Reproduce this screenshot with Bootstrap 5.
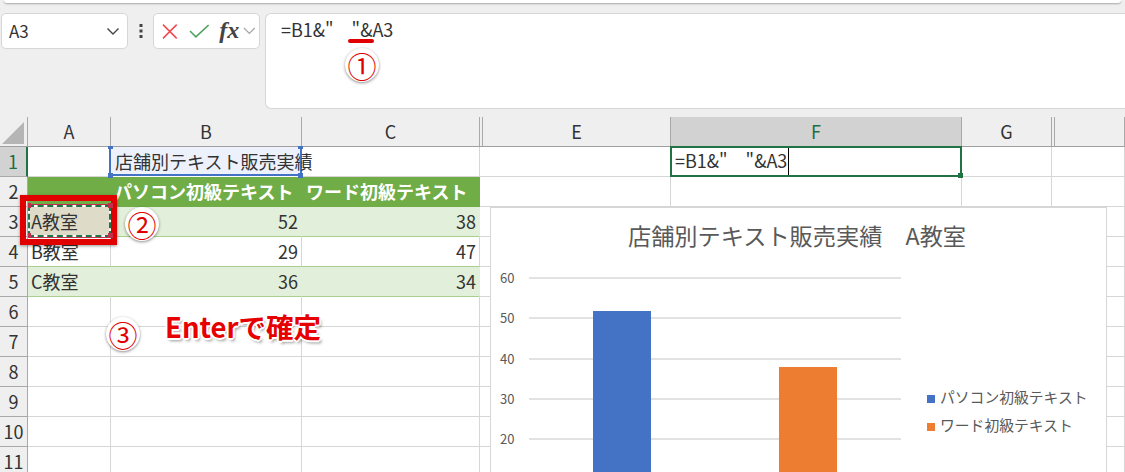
<!DOCTYPE html>
<html lang="ja">
<head>
<meta charset="utf-8">
<title>Excel</title>
<link href="https://cdn.jsdelivr.net/npm/bootstrap@5.3.0/dist/css/bootstrap.min.css" rel="stylesheet">
<style>
html,body{height:472px;overflow:hidden;margin:0}
body{background:#efefef;font-family:"Noto Sans CJK JP","Noto Sans",sans-serif;color:#333}
.ribbon-edge{height:3px;background:#fff;margin:0 4px;border-radius:0 0 6px 6px;box-shadow:0 1px 2px rgba(0,0,0,.3)}
.fbar{height:114px;padding:10px 0 0 1px}
.fbox{background:#fff;border:1px solid #d6d6d6;border-radius:5px}
.namebox{width:127px;height:36px;padding:0 7px;font-size:17px}
.grip{width:25px;height:36px}
.fxbox{width:107px;height:36px;padding:0 3px 0 8px}
.fx{font-family:"Liberation Serif",serif;font-style:italic;font-weight:700;font-size:24px;color:#444;line-height:1;margin-left:10px;margin-top:-3px}
.formula{position:relative;height:96px;flex:1;margin-left:5px;border-right:0;border-radius:6px 0 0 6px;padding:3px 15px;font-size:18px;line-height:25px;white-space:pre}
.underline-red{position:absolute;left:82px;top:25px;width:26px;height:4px;background:#e00000;border-radius:2px}
.num-badge{position:absolute;border-radius:50%;background:#fff;box-shadow:0 1px 3px rgba(0,0,0,.45);color:#e00000;width:34px;height:34px;font-size:29px;line-height:1}
.sheet{position:relative;height:355px;overflow:hidden;background:#fff;display:grid;grid-template-columns:28px 83px 191px 178px 3px 188px 291px 90px 3px 1fr;grid-auto-rows:30px;font-size:18px}
.cell{border-right:1px solid #d6d6d6;border-bottom:1px solid #d6d6d6;padding:0 3px;line-height:28px;white-space:pre;background:#fff}
.thin{border-right:0;padding:0}
.num{text-align:right;padding-right:3px}
.colh{background:#efefef;border-right:1px solid #a9a9a9;border-bottom:1px solid #9f9f9f;text-align:center;padding:0;line-height:29px}
.colh-on{background:#d2d2d2;color:#1f6e43}
.rowh{background:#efefef;border-right:1px solid #a9a9a9;border-bottom:1px solid #a9a9a9;text-align:center;padding:0;line-height:29px}
.rowh-on{background:#d2d2d2;color:#1f6e43;border-right:2px solid #217346}
.corner{position:relative}
.corner svg{position:absolute;left:2px;top:5px}
.hdr{background:#70ad47;color:#fff;font-weight:700;border-right-color:#70ad47;border-bottom-color:#70ad47}
.hdr-c{padding-left:4px}
.band{background:#e2efda;border-right-color:#e2efda;border-bottom-color:#a9d08e}
.plain{border-bottom-color:#a9d08e}
.ants{background:#dedbc9}
.sel-b{position:relative;padding-left:4px;background:#ecf1fb;box-shadow:-2px 0 0 #4472c4,inset 0 -2px 0 #4472c4;border-right-color:#4472c4;border-bottom-color:#fff;overflow:visible}
.sel-b::after{content:"";position:absolute;right:0;top:0;bottom:0;width:1px;background:#4472c4}
.hnd{position:absolute;width:5px;height:5px;background:#4472c4}
.active-f{position:absolute;left:670px;top:29px;width:292px;height:31px;border:2px solid #217346;font-size:18px;line-height:25px;padding-left:3px;white-space:pre;background:#fff}
.caret-line{display:inline-block;width:1px;height:27px;background:#000;vertical-align:top;margin-left:1px}
.fill-h{position:absolute;right:-3px;bottom:-3px;width:5px;height:5px;background:#217346;border:0}
.redbox{position:absolute;left:20px;top:78px;width:97px;height:50px;border:6px solid #e00000;box-shadow:0 1px 3px rgba(0,0,0,.4)}
.ants-line{position:absolute;left:2px;top:4px;width:83px;height:32px;border:2px solid #fff;box-shadow:0 -1px 0 #c0304a,0 1px 0 #c0304a}
.ants-line::after{content:"";position:absolute;inset:-2px;border:2px dashed #217346}
.red-h{position:absolute;width:5px;height:5px;background:#c0304a}
.chartbox{position:absolute;left:490px;top:90px;width:617px;height:290px;background:#fff;border:1px solid #d6d6d6;border-bottom:0}
.chartbox svg{display:block}
.chartbox text{font-family:"Noto Sans CJK JP","Noto Sans",sans-serif;fill:#595959}
.enter-t{position:absolute;left:165px;top:190px;font-size:27.500px;font-weight:700;line-height:38px;color:#e60000;white-space:pre;text-shadow:1px 1px 0 #fff,-1px -1px 0 #fff,1px -1px 0 #fff,-1px 1px 0 #fff,2px 0 0 #fff,-2px 0 0 #fff,0 2px 0 #fff,0 -2px 0 #fff,2px 3px 3px rgba(0,0,0,.4)}
</style>
</head>
<body>
<div class="ribbon-edge"></div>
<div class="fbar d-flex align-items-start">
  <div class="fbox namebox d-flex align-items-center justify-content-between">
    <span>A3</span>
    <svg width="14" height="9" viewBox="0 0 14 9"><path d="M1.5 1.5 7 7l5.500-5.500" fill="none" stroke="#444" stroke-width="1.400"/></svg>
  </div>
  <div class="grip d-flex align-items-center justify-content-center">
    <svg width="4" height="14" viewBox="0 0 4 14"><rect x=".5" y="0" width="3" height="3" fill="#444"/><rect x=".5" y="5.500" width="3" height="3" fill="#444"/><rect x=".5" y="11" width="3" height="3" fill="#444"/></svg>
  </div>
  <div class="fbox fxbox d-flex align-items-center">
    <svg width="16" height="15" viewBox="0 0 16 15"><path d="M1 .5l14 14M15 .5l-14 14" fill="none" stroke="#f0484e" stroke-width="1.500"/></svg>
    <svg width="21" height="14" viewBox="0 0 21 14" style="margin-left:11px"><path d="M1 7l6 6L20 1" fill="none" stroke="#4ea25f" stroke-width="1.500"/></svg>
    <span class="fx">fx</span>
    <svg class="ms-1" width="13" height="8" viewBox="0 0 13 8"><path d="M1 1l5.500 5.500L12 1" fill="none" stroke="#a6a6a6" stroke-width="1.300"/></svg>
  </div>
  <div class="fbox formula">=B1&amp;"　"&amp;A3<span class="underline-red"></span><span class="num-badge d-flex align-items-center justify-content-center" style="left:79px;top:34px">①</span></div>
</div>
<div class="sheet">
  <div class="cell colh corner"><svg width="22" height="22" viewBox="0 0 22 22"><path d="M22 0v22H0z" fill="#b5b5b5"/></svg></div><div class="cell colh">A</div><div class="cell colh">B</div><div class="cell colh">C</div><div class="cell colh"></div><div class="cell colh">E</div><div class="cell colh colh-on">F</div><div class="cell colh">G</div><div class="cell colh"></div><div class="cell colh"></div>

  <div class="cell rowh rowh-on">1</div><div class="cell"></div><div class="cell sel-b">店舗別テキスト販売実績<i class="hnd" style="left:-3px;top:-1px;height:3px"></i><i class="hnd" style="left:187px;top:-1px;height:3px"></i><i class="hnd" style="left:-3px;top:26px"></i><i class="hnd" style="left:187px;top:26px"></i></div><div class="cell"></div><div class="cell thin"></div><div class="cell"></div><div class="cell"></div><div class="cell"></div><div class="cell thin"></div><div class="cell"></div>

  <div class="cell rowh">2</div><div class="cell hdr"></div><div class="cell hdr">パソコン初級テキスト</div><div class="cell hdr hdr-c">ワード初級テキスト</div><div class="cell thin"></div><div class="cell"></div><div class="cell"></div><div class="cell"></div><div class="cell thin"></div><div class="cell"></div>

  <div class="cell rowh">3</div><div class="cell band ants">A教室</div><div class="cell band num">52</div><div class="cell band num">38</div><div class="cell thin"></div><div class="cell"></div><div class="cell"></div><div class="cell"></div><div class="cell thin"></div><div class="cell"></div>

  <div class="cell rowh">4</div><div class="cell plain">B教室</div><div class="cell plain num">29</div><div class="cell plain num">47</div><div class="cell thin"></div><div class="cell"></div><div class="cell"></div><div class="cell"></div><div class="cell thin"></div><div class="cell"></div>

  <div class="cell rowh">5</div><div class="cell band">C教室</div><div class="cell band num">36</div><div class="cell band num">34</div><div class="cell thin"></div><div class="cell"></div><div class="cell"></div><div class="cell"></div><div class="cell thin"></div><div class="cell"></div>

  <div class="cell rowh">6</div><div class="cell"></div><div class="cell"></div><div class="cell"></div><div class="cell thin"></div><div class="cell"></div><div class="cell"></div><div class="cell"></div><div class="cell thin"></div><div class="cell"></div>
  <div class="cell rowh">7</div><div class="cell"></div><div class="cell"></div><div class="cell"></div><div class="cell thin"></div><div class="cell"></div><div class="cell"></div><div class="cell"></div><div class="cell thin"></div><div class="cell"></div>
  <div class="cell rowh">8</div><div class="cell"></div><div class="cell"></div><div class="cell"></div><div class="cell thin"></div><div class="cell"></div><div class="cell"></div><div class="cell"></div><div class="cell thin"></div><div class="cell"></div>
  <div class="cell rowh">9</div><div class="cell"></div><div class="cell"></div><div class="cell"></div><div class="cell thin"></div><div class="cell"></div><div class="cell"></div><div class="cell"></div><div class="cell thin"></div><div class="cell"></div>
  <div class="cell rowh">10</div><div class="cell"></div><div class="cell"></div><div class="cell"></div><div class="cell thin"></div><div class="cell"></div><div class="cell"></div><div class="cell"></div><div class="cell thin"></div><div class="cell"></div>
  <div class="cell rowh">11</div><div class="cell"></div><div class="cell"></div><div class="cell"></div><div class="cell thin"></div><div class="cell"></div><div class="cell"></div><div class="cell"></div><div class="cell thin"></div><div class="cell"></div>

  <div class="active-f">=B1&amp;"　"&amp;A3<span class="caret-line"></span><i class="fill-h"></i></div>

  <div class="chartbox">
    <svg width="615" height="290" viewBox="0 0 615 290">
      <text x="137" y="37" font-size="23.200">店舗別テキスト販売実績　A教室</text>
      <g stroke="#d9d9d9" stroke-width="1.300">
        <path d="M38 70H410"/><path d="M38 110H410"/><path d="M38 151H410"/><path d="M38 191H410"/><path d="M38 231H410"/>
      </g>
      <g font-size="13">
        <text x="9" y="75">60</text><text x="9" y="115">50</text><text x="9" y="156">40</text><text x="9" y="196">30</text><text x="9" y="236">20</text>
      </g>
      <rect x="102" y="103" width="58" height="187" fill="#4472c4"/>
      <rect x="288" y="159" width="58" height="131" fill="#ed7d31"/>
      <rect x="436" y="187" width="8" height="8" fill="#4472c4"/>
      <text x="449" y="195" font-size="14.800">パソコン初級テキスト</text>
      <rect x="436" y="215" width="8" height="8" fill="#ed7d31"/>
      <text x="449" y="223" font-size="14.800">ワード初級テキスト</text>
    </svg>
  </div>

  <div class="redbox"><div class="ants-line"></div><i class="red-h" style="left:82px;top:2px"></i><i class="red-h" style="left:82px;top:32px"></i><i class="red-h" style="left:2px;top:2px;width:3px"></i><i class="red-h" style="left:2px;top:32px;width:3px"></i></div>
  <span class="num-badge d-flex align-items-center justify-content-center" style="left:125px;top:90px">②</span>
  <span class="num-badge d-flex align-items-center justify-content-center" style="left:106px;top:200px">③</span>
  <div class="enter-t">Enterで確定</div>
</div>
<script src="https://cdn.jsdelivr.net/npm/bootstrap@5.3.0/dist/js/bootstrap.bundle.min.js"></script>
</body>
</html>
